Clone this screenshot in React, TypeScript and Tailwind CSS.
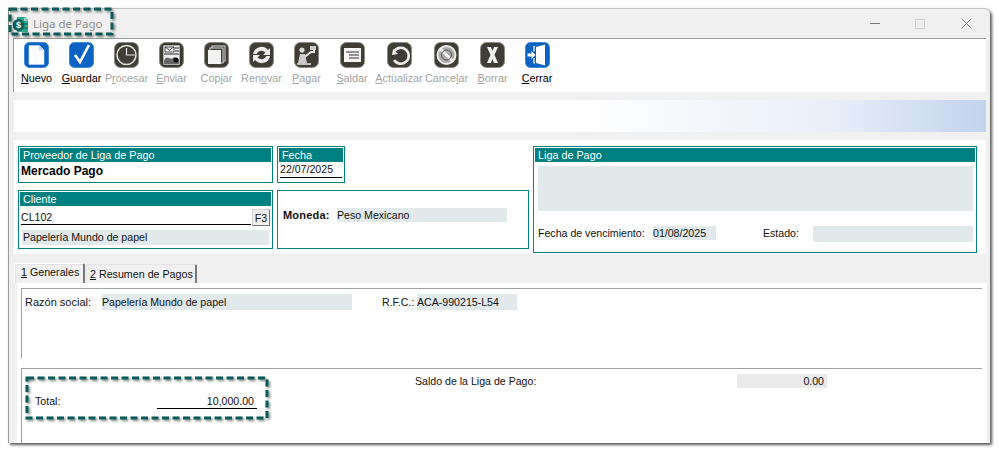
import React from "react";

const Blue = ({ children }: { children: React.ReactNode }) => (
  <svg width="25" height="26" viewBox="0 0 25 26">
    <rect x="0.5" y="0.5" width="24" height="25" rx="5" fill="#0a62c4" stroke="#3f86d4" />
    {children}
  </svg>
);
const Dark = ({ children }: { children: React.ReactNode }) => (
  <svg width="25" height="26" viewBox="0 0 25 26">
    <rect x="0.5" y="0.5" width="24" height="25" rx="6" fill="#3f3d36" stroke="#8c8a82" />
    {children}
  </svg>
);

const icons: Record<string, React.ReactNode> = {
  nuevo: (
    <Blue>
      <path d="M5 3.5h10.5l4.5 4.5v14.5h-15z" fill="#fff" stroke="#cfe0f5" strokeWidth="0.6" />
      <path d="M15 3.5v5h5" fill="#b9d2ef" />
    </Blue>
  ),
  guardar: (
    <Blue>
      <path d="M6 13l5 7L20 3" fill="none" stroke="#fff" strokeWidth="2.6" />
    </Blue>
  ),
  procesar: (
    <Dark>
      <circle cx="12.5" cy="13" r="9.5" fill="#3f3d36" stroke="#ddd" strokeWidth="1.6" />
      <path d="M12.5 6v7H21" fill="none" stroke="#e5e5e5" strokeWidth="1.2" />
    </Dark>
  ),
  enviar: (
    <Dark>
      <rect x="4" y="3" width="17" height="20" fill="#eee" stroke="#222" strokeWidth="0.6" />
      <path d="M6 5h9v5H6zM6 5l4.500 3L15 5" fill="#fff" stroke="#222" strokeWidth="0.8" />
      <path d="M16 6h4M16 9h4M5 12h15" stroke="#222" />
      <path d="M5 19c1-4 4-4 5-3l3 1c1-2 5-2 7 1v4H5z" fill="#666" />
      <circle cx="17" cy="18" r="2.600" fill="#111" />
    </Dark>
  ),
  copiar: (
    <Dark>
      <rect x="8" y="4" width="13" height="15" fill="none" stroke="#ddd" strokeWidth="1" />
      <rect x="6" y="6" width="13" height="15" fill="#3f3d36" stroke="#ddd" strokeWidth="1" />
      <rect x="4" y="8" width="13" height="14" fill="#f2f2f2" />
    </Dark>
  ),
  renovar: (
    <Dark>
      <path d="M4 12a8.5 8.5 0 0 1 15-4l2-2v7h-7l2.500-2.500A5.500 5.500 0 0 0 7.500 12z" fill="#eee" />
      <path d="M21 14a8.500 8.500 0 0 1-15 4l-2 2v-7h7l-2.500 2.500A5.500 5.500 0 0 0 17.500 14z" fill="#eee" />
    </Dark>
  ),
  pagar: (
    <Dark>
      <path d="M8 17l9-7h3V6" fill="none" stroke="#eee" strokeWidth="2" />
      <path d="M16 4h6v4h-6z" fill="#ccc" />
      <circle cx="8" cy="8" r="2.600" fill="#ddd" />
      <path d="M4 21l2-9h5l2 9z" fill="#ccc" />
      <path d="M3 22h14" stroke="#eee" strokeWidth="1.500" />
    </Dark>
  ),
  saldar: (
    <Dark>
      <rect x="4" y="6" width="17" height="14" fill="#f5f5f5" />
      <path d="M6 10h13M9 13h10M9 16h10" stroke="#333" strokeWidth="1.200" />
    </Dark>
  ),
  actualizar: (
    <Dark>
      <path d="M6 7l-1 6 6-1" fill="#eee" />
      <path d="M7 9.500A8 8 0 1 1 7 18" fill="none" stroke="#eee" strokeWidth="2.600" />
    </Dark>
  ),
  cancelar: (
    <Dark>
      <circle cx="12.500" cy="13" r="9" fill="#aaa" stroke="#eee" strokeWidth="2" />
      <path d="M6.500 7l12 12" stroke="#eee" strokeWidth="3" />
      <circle cx="12.500" cy="13" r="5" fill="none" stroke="#555" strokeWidth="1" />
    </Dark>
  ),
  borrar: (
    <Dark>
      <path d="M7 5h4l1.500 4L14 5h4l-3.500 8 3.500 8h-4l-1.500-4-1.500 4H7l3.500-8z" fill="#f2f2f2" />
    </Dark>
  ),
  cerrar: (
    <Blue>
      <path d="M11 5l9-2.500v21L11 21z" fill="#fff" />
      <path d="M10 4.500h-1v5M10 21H9v-5" fill="none" stroke="#fff" strokeWidth="1.200" />
      <path d="M2.500 11.500h4V9l4 4-4 4v-2.500h-4z" fill="#fff" />
    </Blue>
  ),
};

const tools = [
  { k: "nuevo", a: "", u: "N", b: "uevo", on: true, w: "w-[45px]" },
  { k: "guardar", a: "", u: "G", b: "uardar", on: true, w: "w-[45px]" },
  { k: "procesar", a: "P", u: "r", b: "ocesar", on: false, w: "w-[45px]" },
  { k: "enviar", a: "", u: "E", b: "nviar", on: false, w: "w-[45px]" },
  { k: "copiar", a: "Cop", u: "i", b: "ar", on: false, w: "w-[45px]" },
  { k: "renovar", a: "Ren", u: "o", b: "var", on: false, w: "w-[45px]" },
  { k: "pagar", a: "", u: "P", b: "agar", on: false, w: "w-[45px]" },
  { k: "saldar", a: "", u: "S", b: "aldar", on: false, w: "w-[46px]" },
  { k: "actualizar", a: "", u: "A", b: "ctualizar", on: false, w: "w-[48px]" },
  { k: "cancelar", a: "Cance", u: "l", b: "ar", on: false, w: "w-[47px]" },
  { k: "borrar", a: "", u: "B", b: "orrar", on: false, w: "w-[45px]" },
  { k: "cerrar", a: "", u: "C", b: "errar", on: true, w: "w-[44px]" },
];

const Head = ({ children }: { children: React.ReactNode }) => (
  <div className="h-[14px] bg-[#008080] text-white pl-[3px] text-[10.8px] leading-[14px]">{children}</div>
);

const Box = ({ className, children }: { className: string; children: React.ReactNode }) => (
  <div className={`border border-[#008080] p-px bg-white ${className}`}>{children}</div>
);

const Dashes = ({ w, h, className }: { w: number; h: number; className: string }) => (
  <svg width={w} height={h} viewBox={`0 0 ${w} ${h}`} className={`absolute ${className}`}>
    <defs>
      <filter id={`sh${w}`} x="-10%" y="-20%" width="120%" height="150%">
        <feDropShadow dx="1.500" dy="1.500" stdDeviation="1.200" floodColor="#000" floodOpacity="0.5" />
      </filter>
    </defs>
    <rect x="3" y="3" width={w - 8} height={h - 8} fill="none" stroke="#0d5a58" strokeWidth="3" strokeDasharray="7 3.500" filter={`url(#sh${w})`} />
  </svg>
);

export default function App() {
  return (
    <div className="relative w-[999px] h-[452px] bg-white pl-[8px] pt-[8px] overflow-hidden [font-family:'Liberation_Sans',Arial,sans-serif] text-[10.6px] text-[#111]">
      <div className="w-[982px] h-[435px] bg-[#f0f0f0] rounded-tr-[6px] border-t border-t-[#c4c4c4] border-l border-l-[#9a9a9a] shadow-[2px_2px_3px_rgba(0,0,0,0.65)] flex flex-col overflow-hidden">
        {/* title bar */}
        <div className="h-[29px] shrink-0 flex items-center pl-[3px] pr-[18px]">
          <svg width="17" height="17" viewBox="0 0 17 17" className="shrink-0 mt-[1px]">
            <path d="M5 1h8l3 3v12H5z" fill="#2fa58c" />
            <path d="M12 1v4h4z" fill="#8fd6c6" />
            <path d="M10 7h6v2h-6zM10 11h6v2h-6z" fill="#1d8570" />
            <circle cx="6.500" cy="9" r="6" fill="#0d5f5c" />
            <text x="6.500" y="12" textAnchor="middle" fontSize="9" fontWeight="700" fill="#fff" fontFamily="Liberation Sans">$</text>
          </svg>
          <span className="ml-[4px] text-[11.5px] text-[#8c8c8c] [font-family:'Noto_Sans',sans-serif]">Liga de Pago</span>
          <div className="ml-auto flex items-center gap-[35px]">
            <div className="w-[10px] h-px bg-[#777]" />
            <div className="w-[10px] h-[10px] border border-[#d4d4d4]" />
            <svg width="11" height="11" viewBox="0 0 11 11" className="ml-[1px]">
              <path d="M0.500 0.500l10 10M10.500 0.500l-10 10" stroke="#777" strokeWidth="0.900" />
            </svg>
          </div>
        </div>

        <div className="flex-1 flex flex-col pl-[4px] pr-[4px]">
          {/* toolbar */}
          <div className="h-[54px] shrink-0 bg-white border-t border-l border-[#9c9c9c] flex items-start">
            {tools.map((t) => (
              <div key={t.k} className={`${t.w} shrink-0 flex flex-col items-center pt-[3px]`}>
                {icons[t.k]}
                <span className={`mt-[3px] whitespace-nowrap text-[10.8px] leading-[14px] ${t.on ? "text-black" : "text-[#a3a3a3]"}`}>
                  {t.a}
                  <span className="underline">{t.u}</span>
                  {t.b}
                </span>
              </div>
            ))}
          </div>

          {/* gradient strip */}
          <div className="h-[32px] mt-[8px] shrink-0 ml-px bg-[linear-gradient(90deg,#ffffff_0%,#ffffff_58%,#e9eef9_84%,#c2d3ee_100%)]" />

          {/* header form */}
          <div className="h-[114px] mt-[8px] shrink-0 ml-px bg-white flex pl-[4px] pt-[6px] gap-[4px]">
            <div className="w-[511px] flex flex-col gap-[7px]">
              <div className="flex gap-[4px]">
                <Box className="w-[255px] h-[37px]">
                  <Head>Proveedor de Liga de Pago</Head>
                  <div className="pl-px pt-[2px] text-[12px] font-bold leading-[15px] text-black">Mercado Pago</div>
                </Box>
                <Box className="w-[68px] h-[37px]">
                  <Head>Fecha</Head>
                  <div className="mx-px border-b border-black leading-[15px]">22/07/2025</div>
                </Box>
              </div>
              <div className="flex gap-[4px]">
                <Box className="w-[255px] h-[59px]">
                  <Head>Cliente</Head>
                  <div className="flex items-end h-[19px] pl-px pr-px">
                    <div className="w-[230px] border-b border-black leading-[14px]">CL102</div>
                    <div className="ml-px w-[18px] h-[17px] -mb-[1px] bg-[#f0f0f0] border border-[#d0d0d0] border-r-[#777] border-b-[#777] text-center leading-[16px]">F3</div>
                  </div>
                  <div className="mt-[5px] mx-[2px] h-[15px] bg-[#e1e9ea] leading-[15px] pl-px">Papelería Mundo de papel</div>
                </Box>
                <Box className="w-[252px] h-[59px] flex items-start pl-[5px] pt-[17px]">
                  <span className="font-bold w-[54px] text-[11px] leading-[14px] tracking-[0.2px]">Moneda:</span>
                  <div className="w-[170px] h-[14px] bg-[#e1e9ea] leading-[14px]">Peso Mexicano</div>
                </Box>
              </div>
            </div>
            <Box className="w-[444px] h-[107px]">
              <Head>Liga de Pago</Head>
              <div className="mt-[4px] ml-[3px] mr-[2px] h-[45px] bg-[#e1e9ea]" />
              <div className="mt-[15px] ml-[3px] mr-[2px] flex items-start">
                <span className="w-[115px] leading-[14px] whitespace-nowrap">Fecha de vencimiento:</span>
                <div className="w-[63px] h-[14px] bg-[#e1e9ea] leading-[14px]">01/08/2025</div>
                <span className="ml-[47px] w-[50px] leading-[14px]">Estado:</span>
                <div className="w-[160px] h-[16px] bg-[#e1e9ea]" />
              </div>
            </Box>
          </div>

          {/* tabs */}
          <div className="h-[22px] mt-[7px] shrink-0 flex items-end ml-px whitespace-nowrap">
            <div className="w-[71px] h-[21px] bg-[#f0f0f0] border-t border-l border-[#fff] border-r-2 border-r-[#777] rounded-t-[2px] text-[10.7px] leading-[17px] pl-[6px] -mb-px shadow-[inset_1px_1px_0_#e2e2e2]">
              <span className="underline">1</span> Generales
            </div>
            <div className="ml-px w-[111px] h-[19px] border-t border-l border-[#e4e4e4] border-r-2 border-r-[#777] rounded-t-[2px] text-[10.7px] leading-[18px] pl-[3px]">
              <span className="underline">2</span> Resumen de Pagos
            </div>
          </div>

          {/* panel */}
          <div className="flex-1 ml-[4px] bg-white pl-[4px] pr-[5px] pt-[5px] -mr-px">
            <div className="h-[70px] border-t border-l border-[#a0a0a0] flex items-start pl-[3px] pt-[5px]">
              <span className="w-[77px] leading-[16px] text-[11px]">Razón social:</span>
              <div className="w-[250px] h-[16px] bg-[#e1e9ea] leading-[16px]">Papelería Mundo de papel</div>
              <span className="ml-[30px] w-[35px] leading-[16px]">R.F.C.:</span>
              <div className="w-[100px] h-[16px] bg-[#e1e9ea] leading-[16px]">ACA-990215-L54</div>
            </div>
            <div className="h-[75px] mt-[10px] border-t border-l border-[#a0a0a0] flex items-start">
              <div className="w-[393px] pt-[25px] pl-[13px] flex items-start">
                <span className="w-[122px] leading-[14px]">Total:</span>
                <div className="w-[100px] h-[15px] border-b border-black text-right pr-[3px] leading-[14px]">10,000.00</div>
              </div>
              <div className="flex items-start pt-[5px]">
                <span className="w-[322px] leading-[14px]">Saldo de la Liga de Pago:</span>
                <div className="w-[90px] h-[14px] bg-[#eaeaea] text-right pr-[3px] leading-[14px]">0.00</div>
              </div>
            </div>
          </div>
        </div>
      </div>

      {/* annotation frames */}
      <Dashes w={110} h={33} className="left-[7px] top-[6px]" />
      <Dashes w={248} h={48} className="left-[24px] top-[375px]" />
    </div>
  );
}
